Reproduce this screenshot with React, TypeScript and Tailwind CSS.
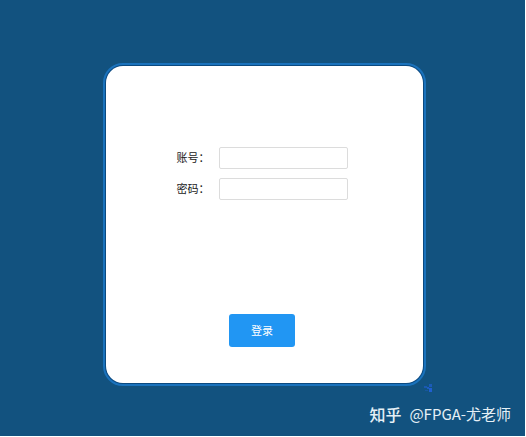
function Field({ id, label, type }: { id: string; label: string; type: string }) {
  return (
    <div className="flex items-center">
      <label htmlFor={id} className="w-[42px] shrink-0 pb-0.5 text-[11px] leading-4 whitespace-nowrap text-[#222222]">
        {label}
      </label>
      <input
        id={id}
        type={type}
        className="h-[22px] w-[129px] rounded-xs border border-[#dcdcdc] bg-white px-2 text-xs text-[#222222] outline-none focus:border-[#2196f3]"
      />
    </div>
  );
}

function ResizeMark() {
  return (
    <svg
      viewBox="0 0 8 8"
      className="absolute -right-2 -bottom-2 size-2"
      fill="#1f5fd0"
      aria-hidden="true"
    >
      <rect x="5" y="0" width="3" height="3" opacity=".7" />
      <rect x="0" y="2" width="3" height="2" opacity=".6" />
      <rect x="3" y="3" width="2" height="2" opacity=".8" />
      <rect x="5" y="4" width="3" height="4" />
      <rect x="1" y="6" width="3" height="1" opacity=".4" />
    </svg>
  );
}

export default function App() {
  return (
    <div className="flex min-h-screen flex-col bg-white pr-px pb-px font-['Noto_Sans_CJK_SC',sans-serif]">
      <div className="flex grow flex-col justify-between bg-[#12527f]">
        <main className="flex justify-center pt-[63px] pl-1">
          <div className="relative w-full max-w-[323px] rounded-[20px] border-2 border-[#1a72bc] bg-[#0b4a80] p-px">
            <form
              onSubmit={(event) => event.preventDefault()}
              className="flex flex-col items-center rounded-[17px] bg-white pt-[81px] pr-[5px] pb-9"
            >
              <div className="flex flex-col gap-[9px]">
                <Field id="account" label="账号：" type="text" />
                <Field id="password" label="密码：" type="password" />
              </div>
              <button
                type="submit"
                className="mt-[114px] h-[33px] w-[66px] rounded-[3px] bg-[#2196f3] pb-px text-[11px] text-white"
              >
                登录
              </button>
            </form>
            <ResizeMark />
          </div>
        </main>
        <footer className="flex items-center justify-end gap-2 pr-3.5 pb-2.5 text-[#e6f0f6]">
          <span className="text-base leading-6 font-medium">知乎</span>
          <span className="text-[15px] leading-6">@FPGA-尤老师</span>
        </footer>
      </div>
    </div>
  );
}
